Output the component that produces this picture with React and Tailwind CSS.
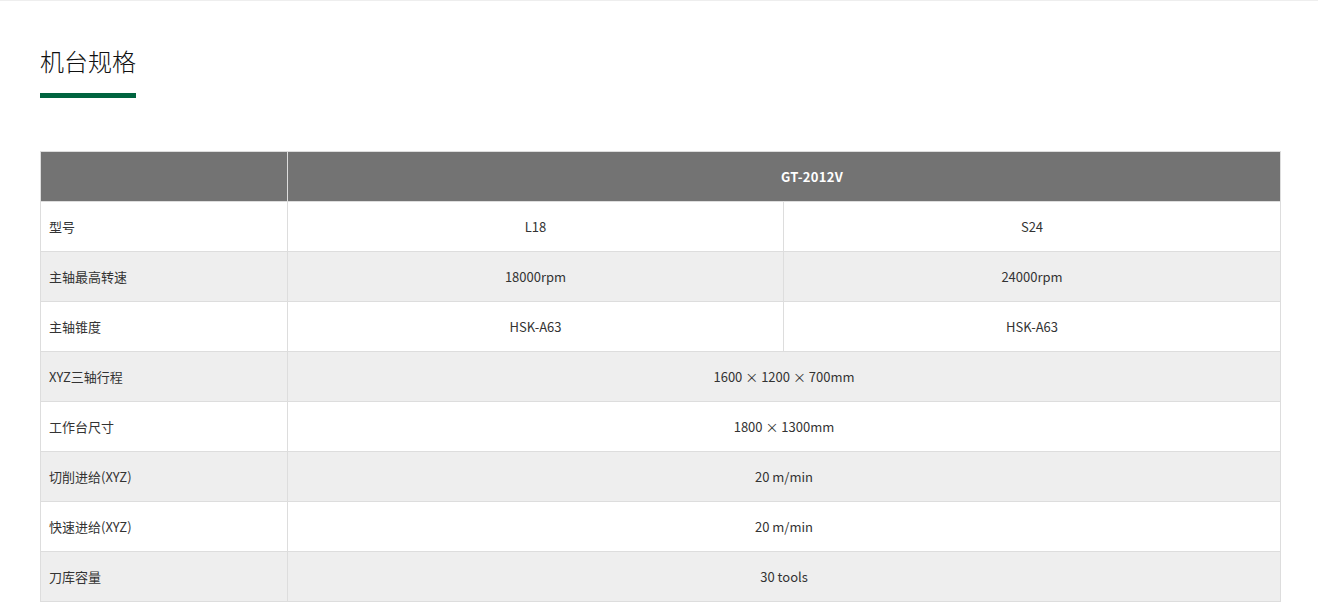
export default function App() {
  const rows = [
    { label: "型号", a: "L18", b: "S24" },
    { label: "主轴最高转速", a: "18000rpm", b: "24000rpm" },
    { label: "主轴锥度", a: "HSK-A63", b: "HSK-A63" },
    { label: "XYZ三轴行程", full: "1600 × 1200 × 700mm" },
    { label: "工作台尺寸", full: "1800 × 1300mm" },
    { label: "切削进给(XYZ)", full: "20 m/min" },
    { label: "快速进给(XYZ)", full: "20 m/min" },
    { label: "刀库容量", full: "30 tools" },
  ];
  const font = { fontFamily: '"Microsoft YaHei", "Noto Sans CJK SC", "Noto Sans", sans-serif' };
  return (
    <div className="w-[1318px] h-[602px] bg-white border-t border-[#eeeeee] overflow-hidden" style={font}>
      <div className="px-10 pt-[42px]">
        <h2 className="text-[24px] leading-[36px] text-[#111] font-light">机台规格</h2>
        <div className="mt-[14px] w-[96px] h-[5px] bg-[#00643f]" />
        <table className="mt-[53px] w-[1240px] border-collapse table-fixed text-[13px] text-[#333]">
          <colgroup>
            <col className="w-[247px]" />
            <col className="w-[496px]" />
            <col className="w-[497px]" />
          </colgroup>
          <thead>
            <tr className="h-[50px] bg-[#737373]">
              <th className="border border-[#dddddd]" />
              <th colSpan={2} className="border border-[#dddddd] pl-[56px] text-white font-bold text-[13px] tracking-[0.3px]">
                GT-2012V
              </th>
            </tr>
          </thead>
          <tbody>
            {rows.map((r, i) => (
              <tr key={i} className={`h-[50px] ${i % 2 === 1 ? "bg-[#eeeeee]" : "bg-white"}`}>
                <td className="border border-[#dddddd] pl-2 text-left">{r.label}</td>
                {r.full ? (
                  <td colSpan={2} className="border border-[#dddddd] text-center">{r.full}</td>
                ) : (
                  <>
                    <td className="border border-[#dddddd] text-center">{r.a}</td>
                    <td className="border border-[#dddddd] text-center">{r.b}</td>
                  </>
                )}
              </tr>
            ))}
          </tbody>
        </table>
      </div>
    </div>
  );
}
